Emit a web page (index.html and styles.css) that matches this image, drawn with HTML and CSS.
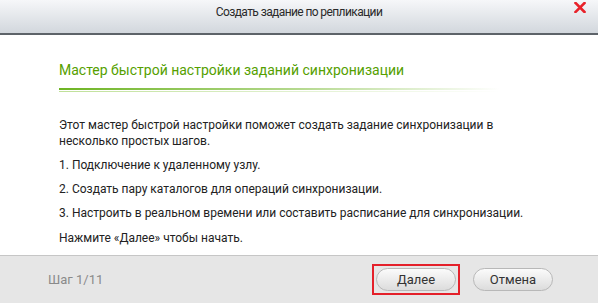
FILE: index.html
```html
<!DOCTYPE html>
<html lang="ru">

<head>
  <meta charset="UTF-8">
  <meta name="viewport" content="width=device-width, initial-scale=1.0">
  <title>Создать задание по репликации</title>
  <link rel="stylesheet" href="styles.css">
</head>

<body>
  <div class="dialog">
    <div class="dialog-header">
      <span class="dialog-title">Создать задание по репликации</span>
      <span class="dialog-close">
        <svg width="12" height="11" viewBox="0 0 12 11">
          <path d="M1.5 1 L10.5 10 M10.5 1 L1.5 10" stroke="#e8222a" stroke-width="2.6" stroke-linecap="square" />
        </svg>
      </span>
    </div>
    <div class="dialog-body">
      <h2 class="wizard-title">Мастер быстрой настройки заданий синхронизации</h2>
      <p>Этот мастер быстрой настройки поможет создать задание синхронизации в несколько простых шагов.</p>
      <p>1. Подключение к удаленному узлу.</p>
      <p>2. Создать пару каталогов для операций синхронизации.</p>
      <p>3. Настроить в реальном времени или составить расписание для синхронизации.</p>
      <p class="start">Нажмите «Далее» чтобы начать.</p>
    </div>
    <div class="dialog-footer">
      <span class="step">Шаг 1/11</span>
      <div class="buttons">
        <span class="focus-box"><button class="btn">Далее</button></span>
        <button class="btn">Отмена</button>
      </div>
    </div>
  </div>
</body>

</html>
```

FILE: styles.css
```css
* {
  margin: 0;
  padding: 0;
  box-sizing: border-box;
}

body {
  background-color: #ffffff;
  font-family: Roboto, "Liberation Sans", sans-serif;
  color: #222222;
}

.dialog {
  width: 598px;
  height: 303px;
  display: flex;
  flex-direction: column;
}

.dialog-header {
  flex-shrink: 0;
  height: 35px;
  background: linear-gradient(#f6f7f9, #d2d7dd);
  border-bottom: 2px solid #5d6369;
  display: flex;
  justify-content: center;
  padding-top: 5px;
  position: relative;
}

.dialog-title {
  font-size: 12px;
  line-height: 14px;
  letter-spacing: -0.6px;
  color: #2a2a2a;
}

.dialog-close {
  position: absolute;
  top: 2px;
  right: 12px;
  line-height: 0;
}

.dialog-body {
  flex: 1;
  min-height: 0;
  overflow: hidden;
  padding: 26px 40px 0 59px;
}

.wizard-title {
  font-size: 14px;
  font-weight: normal;
  line-height: 18px;
  color: #55a000;
  margin-bottom: 25px;
}

.wizard-title::after {
  content: "";
  display: block;
  width: 441px;
  height: 4px;
  margin-top: 9px;
  background:
    linear-gradient(to right, #6db422, rgba(109, 180, 34, 0.5) 55%, rgba(109, 180, 34, 0)) top / 100% 2px no-repeat,
    linear-gradient(to right, #bfe098, rgba(191, 224, 152, 0)) bottom / 100% 1px no-repeat;
}

.dialog-body p {
  font-size: 12px;
  line-height: 16px;
  margin-bottom: 8px;
  width: 480px;
}

.dialog-body p.start {
  margin-top: 9px;
}

.dialog-footer {
  flex-shrink: 0;
  height: 48px;
  background-color: #e6e6e6;
  border-top: 1px solid #c6c6c6;
  display: flex;
  align-items: center;
  justify-content: space-between;
  padding: 0 45px 0 48px;
}

.step {
  font-size: 13px;
  color: #8a8a8a;
}

.buttons {
  display: flex;
  align-items: center;
  gap: 13px;
}

.focus-box {
  display: flex;
  border: 2px solid #e4202a;
  padding: 2px;
}

.btn {
  width: 80px;
  height: 23px;
  border: 1px solid #b8b8b8;
  border-radius: 12px;
  background: linear-gradient(#fbfbfb, #dcdcdc);
  font-family: Roboto, "Liberation Sans", sans-serif;
  font-size: 13px;
  color: #333333;
  cursor: pointer;
}
```
